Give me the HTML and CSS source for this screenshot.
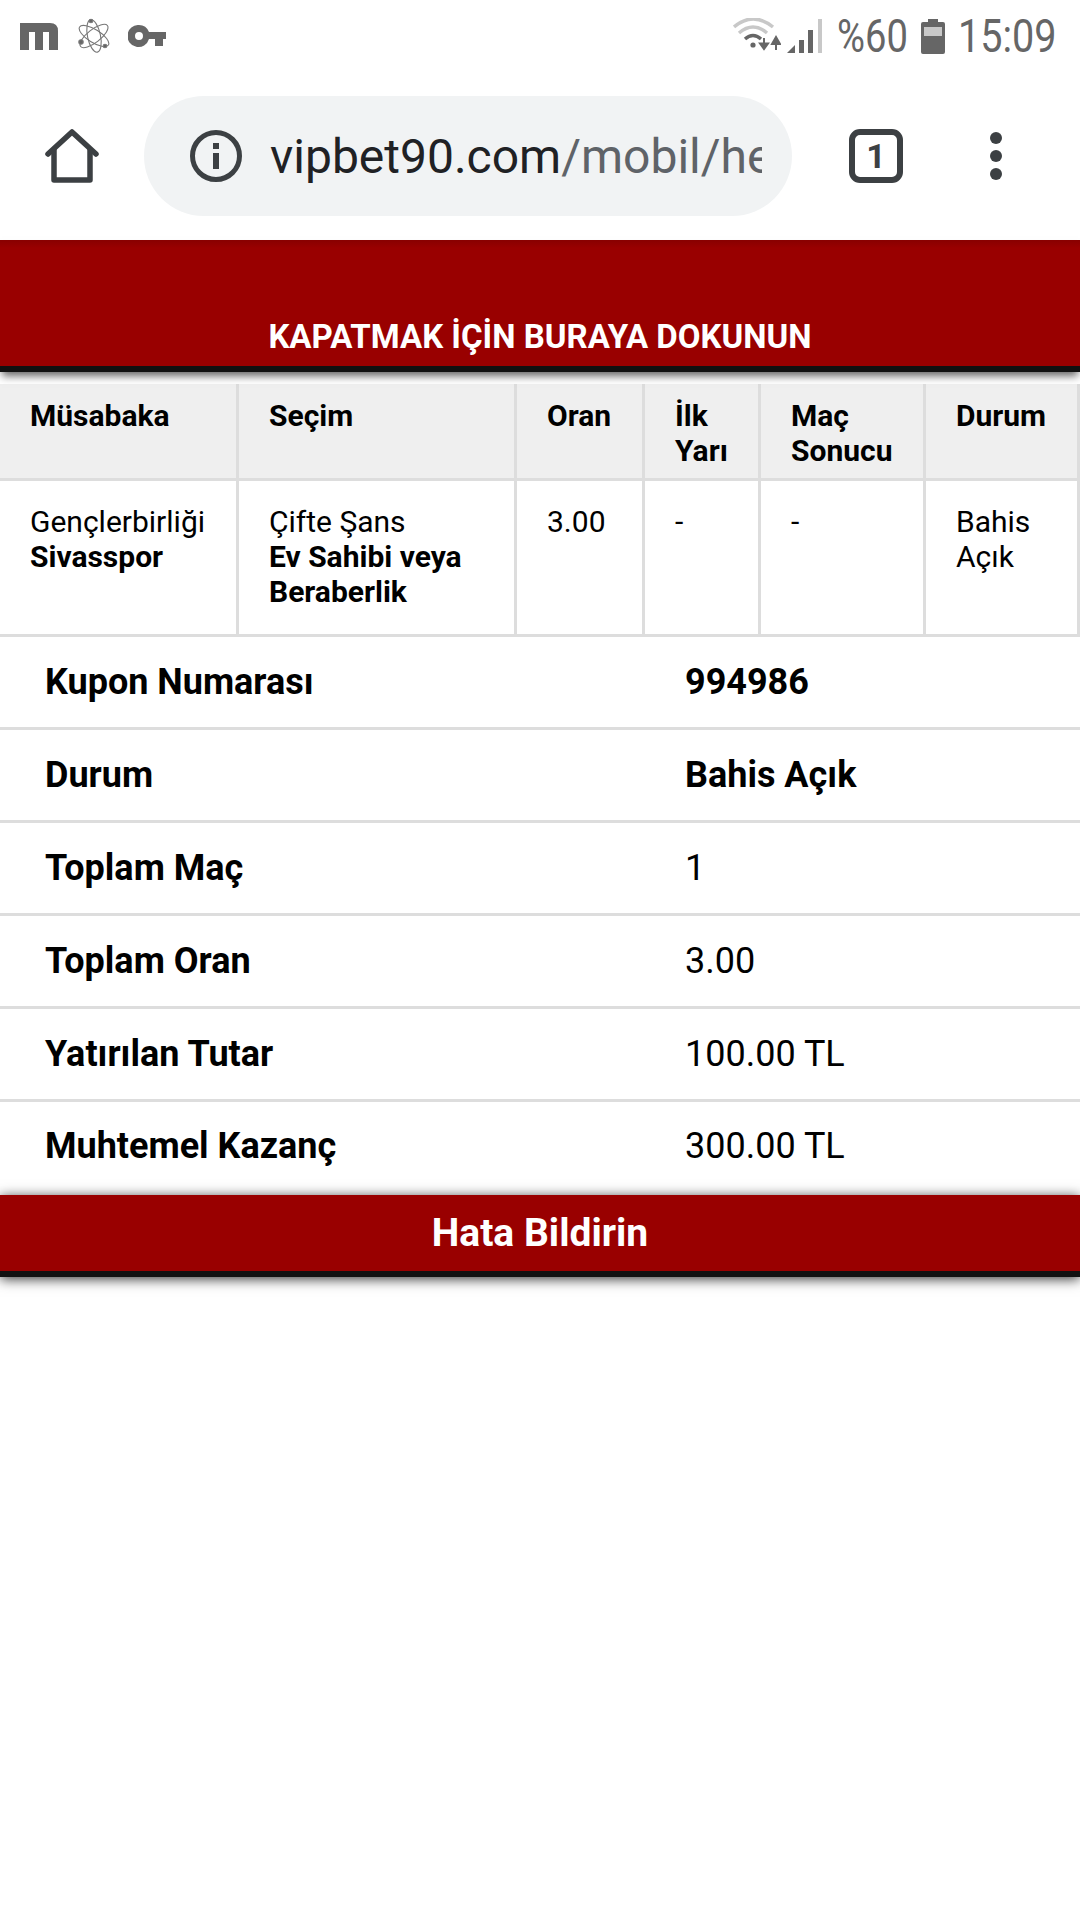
FILE: index.html
```html
<!DOCTYPE html>
<html lang="tr">
<head>
<meta charset="utf-8">
<title>vipbet90</title>
<link rel="stylesheet" href="styles.css">
</head>
<body>
<header class="status">
  <div class="status-left">
    <svg class="i-m" viewBox="0 0 38 27"><path d="M0 0H30Q38 0 38 8V27H29V9H23V27H15V9H9V27H0Z" fill="#666"/></svg>
    <svg class="i-atom" viewBox="0 0 32 36" fill="none" stroke="#777" stroke-width="1.1"><ellipse cx="16" cy="18" rx="6.5" ry="16.5" transform="rotate(-12 16 18)"/><ellipse cx="16" cy="18" rx="6.5" ry="17" transform="rotate(-58 16 18)"/><ellipse cx="16" cy="18" rx="6.5" ry="17" transform="rotate(52 16 18)"/><circle cx="13" cy="3" r="1.8" fill="#666"/><circle cx="3" cy="24" r="2.2" fill="#666"/><circle cx="26" cy="29" r="1.8" fill="#666" transform="translate(1 -1)"/></svg>
    <svg class="i-key" viewBox="0 0 38 22"><path fill-rule="evenodd" d="M11 0A11 11 0 0 1 21 7H38V14H35V21H27V14H21A11 11 0 1 1 11 0ZM11 7A4 4 0 1 0 11 15A4 4 0 1 0 11 7Z" fill="#666"/></svg>
  </div>
  <div class="status-right">
    <svg class="i-wifi" viewBox="0 0 48 36" fill="none"><path d="M1 9Q20 -7 40 9" stroke="#c8c8c8" stroke-width="3.5"/><path d="M6 15Q20 3 34 15" stroke="#c8c8c8" stroke-width="3.5"/><path d="M12 21Q20 14 28 21" stroke="#666" stroke-width="3.5"/><circle cx="20" cy="27" r="2.6" fill="#666"/><path d="M31 20V29M27 25.5L31 31L35 25.5Z" fill="#666" stroke="#666" stroke-width="2"/><path d="M43 32V22M39 26L43 19L47 26Z" fill="#666" stroke="#666" stroke-width="2"/></svg>
    <svg class="i-signal" viewBox="0 0 36 36"><path d="M0 35L8 27V35Z" fill="#666"/><path d="M12 22H17V35H12Z" fill="#666"/><path d="M21 12H26V35H21Z" fill="#666"/><path d="M31 1H35V35H31Z" fill="#c8c8c8"/></svg>
    <span class="status-text pct">%60</span>
    <svg class="i-batt" viewBox="0 0 24 35"><path d="M7 0H17V3H22Q24 3 24 5V33Q24 35 22 35H2Q0 35 0 33V5Q0 3 2 3H7Z" fill="#666"/><path d="M3 8H21V17H3Z" fill="#c8c8c8"/></svg>
    <span class="status-text">15:09</span>
  </div>
</header>

<nav class="toolbar">
  <svg class="i-home" viewBox="0 0 56 56" fill="none" stroke="#3c4043" stroke-width="5.5" stroke-linejoin="round" stroke-linecap="round"><path d="M4 26L28 4L52 26"/><path d="M10 22V52H46V22"/></svg>
  <div class="pill">
    <svg class="i-info" viewBox="0 0 52 52"><circle cx="26" cy="26" r="23.5" fill="none" stroke="#3c4043" stroke-width="5"/><path d="M23 13H29V19H23ZM23 23H29V39H23Z" fill="#3c4043"/></svg>
    <div class="url"><span class="host">vipbet90.com</span><span class="path">/mobil/he</span></div>
  </div>
  <div class="tabs">1</div>
  <div class="dots"><i></i><i></i><i></i></div>
</nav>

<main>
  <div class="close-bar">KAPATMAK İÇİN BURAYA DOKUNUN</div>

  <table class="matches">
    <thead>
      <tr>
        <th class="c1">Müsabaka</th>
        <th class="c2">Seçim</th>
        <th class="c3">Oran</th>
        <th class="c4">İlk Yarı</th>
        <th class="c5">Maç Sonucu</th>
        <th class="c6">Durum</th>
      </tr>
    </thead>
    <tbody>
      <tr>
        <td>Gençlerbirliği<br><b>Sivasspor</b></td>
        <td>Çifte Şans<br><b>Ev Sahibi veya Beraberlik</b></td>
        <td>3.00</td>
        <td>-</td>
        <td>-</td>
        <td>Bahis Açık</td>
      </tr>
    </tbody>
  </table>

  <section class="summary">
    <div class="row"><b>Kupon Numarası</b><b class="val">994986</b></div>
    <div class="row"><b>Durum</b><b class="val">Bahis Açık</b></div>
    <div class="row"><b>Toplam Maç</b><span class="val">1</span></div>
    <div class="row"><b>Toplam Oran</b><span class="val">3.00</span></div>
    <div class="row"><b>Yatırılan Tutar</b><span class="val">100.00 TL</span></div>
    <div class="row last"><b>Muhtemel Kazanç</b><span class="val">300.00 TL</span></div>
  </section>

  <div class="report">Hata Bildirin</div>
</main>
</body>
</html>
```
FILE: styles.css
```css
* { box-sizing: border-box; }
html, body { margin: 0; padding: 0; }
body {
  width: 1080px;
  height: 1920px;
  overflow: hidden;
  background: #fff;
  color: #000;
  font-family: Roboto, "Noto Sans", sans-serif;
}
svg { display: block; flex: none; }

.status {
  height: 72px;
  padding: 0 26px 0 20px;
  display: flex;
  justify-content: space-between;
  align-items: center;
}
.status-left { display: flex; align-items: center; }
.i-m { width: 38px; height: 27px; }
.i-atom { width: 32px; height: 36px; margin-left: 20px; }
.i-key { width: 38px; height: 22px; margin-left: 18px; }
.status-right { display: flex; align-items: center; }
.i-wifi { width: 48px; height: 36px; }
.i-signal { width: 36px; height: 36px; margin-left: 6px; }
.status-text {
  font-size: 46px;
  line-height: 46px;
  color: #666;
  display: inline-block;
  width: 96px;
  transform: scaleX(0.86);
  transform-origin: left center;
  white-space: nowrap;
}
.status-text.pct {
  width: 68px;
  margin-left: 14px;
  transform: scaleX(0.83);
}
.i-batt { width: 24px; height: 35px; margin: 0 13px 0 16px; }

.toolbar {
  height: 168px;
  padding-left: 44px;
  display: flex;
  align-items: center;
}
.i-home { width: 56px; height: 56px; }
.pill {
  width: 648px;
  height: 120px;
  margin-left: 44px;
  padding: 0 30px 0 46px;
  border-radius: 60px;
  background: #f1f3f4;
  display: flex;
  align-items: center;
}
.i-info { width: 52px; height: 52px; }
.url {
  margin-left: 28px;
  padding-top: 2px;
  flex: 1;
  overflow: hidden;
  white-space: nowrap;
  font-size: 48px;
  line-height: 60px;
}
.host { color: #202124; }
.path { color: #5f6368; }
.tabs {
  width: 54px;
  height: 54px;
  margin-left: 57px;
  border: 6px solid #3c4043;
  border-radius: 11px;
  color: #3c4043;
  font-size: 34px;
  font-weight: 700;
  line-height: 42px;
  text-align: center;
}
.dots {
  margin-left: 87px;
  display: flex;
  flex-direction: column;
  gap: 6px;
}
.dots i {
  display: block;
  width: 12px;
  height: 12px;
  border-radius: 50%;
  background: #3c4043;
}

.close-bar {
  height: 132px;
  padding-top: 72px;
  background: linear-gradient(#880000 0, #990000 8px);
  border-bottom: 6px solid #111;
  box-shadow: 0 6px 8px -2px rgba(0, 0, 0, .6);
  color: #fff;
  font-size: 33px;
  font-weight: 700;
  line-height: 50px;
  text-align: center;
  position: relative;
}

.matches {
  width: 1080px;
  margin-top: 12px;
  table-layout: fixed;
  border-collapse: separate;
  border-spacing: 0;
  font-size: 30px;
  line-height: 35px;
}
.matches th, .matches td {
  padding-left: 30px;
  padding-right: 6px;
  border-right: 3px solid #ddd;
  border-bottom: 3px solid #ddd;
  text-align: left;
  vertical-align: top;
}
.matches th {
  padding-top: 14px;
  padding-bottom: 10px;
  background: #efefef;
  font-weight: 700;
}
.matches td { padding-top: 23px; padding-bottom: 25px; }
.c1 { width: 239px; }
.c2 { width: 278px; }
.c3 { width: 128px; }
.c4 { width: 116px; }
.c5 { width: 165px; }
.c6 { width: 154px; }

.summary { font-size: 36px; }
.row {
  height: 93px;
  padding-left: 45px;
  border-bottom: 3px solid #ddd;
  display: grid;
  grid-template-columns: 640px 1fr;
  align-items: center;
}
.row.last { border-bottom: 0; padding-bottom: 5px; }

.report {
  height: 82px;
  background: #990000;
  border-bottom: 6px solid #111;
  box-shadow: 0 2px 12px rgba(0, 0, 0, .8);
  color: #fff;
  font-size: 39px;
  font-weight: 700;
  line-height: 76px;
  text-align: center;
  position: relative;
}
```
